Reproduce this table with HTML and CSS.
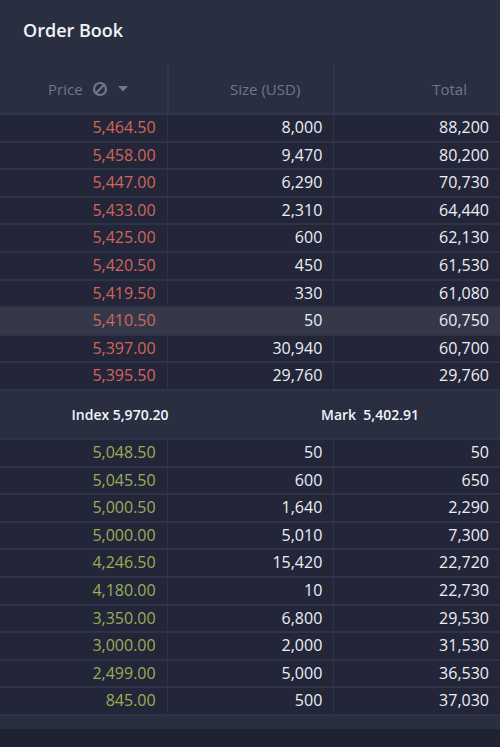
FILE: index.html
```html
<!DOCTYPE html>
<html>
<head>
<meta charset="utf-8">
<link rel="stylesheet" href="styles.css">
</head>
<body>
<div class="panel">
  <div class="title">Order Book</div>
  <div class="thead">
    <div class="th th-price">Price
      <svg class="ico-none" width="16" height="16" viewBox="0 0 16 16"><circle cx="8" cy="8" r="6" fill="none" stroke="currentColor" stroke-width="2.2"/><line x1="3.8" y1="12.2" x2="12.2" y2="3.8" stroke="currentColor" stroke-width="2.2"/></svg>
      <svg class="ico-caret" width="10" height="6" viewBox="0 0 10 6"><path d="M0 0 L10 0 L5 5.5 Z" fill="currentColor"/></svg>
    </div>
    <div class="th">Size (USD)</div>
    <div class="th">Total</div>
  </div>
  <div class="rows asks">
    <div class="row"><div class="c price">5,464.50</div><div class="c">8,000</div><div class="c">88,200</div></div>
    <div class="row"><div class="c price">5,458.00</div><div class="c">9,470</div><div class="c">80,200</div></div>
    <div class="row"><div class="c price">5,447.00</div><div class="c">6,290</div><div class="c">70,730</div></div>
    <div class="row"><div class="c price">5,433.00</div><div class="c">2,310</div><div class="c">64,440</div></div>
    <div class="row"><div class="c price">5,425.00</div><div class="c">600</div><div class="c">62,130</div></div>
    <div class="row"><div class="c price">5,420.50</div><div class="c">450</div><div class="c">61,530</div></div>
    <div class="row"><div class="c price">5,419.50</div><div class="c">330</div><div class="c">61,080</div></div>
    <div class="row hover"><div class="c price">5,410.50</div><div class="c">50</div><div class="c">60,750</div></div>
    <div class="row"><div class="c price">5,397.00</div><div class="c">30,940</div><div class="c">60,700</div></div>
    <div class="row"><div class="c price">5,395.50</div><div class="c">29,760</div><div class="c">29,760</div></div>
  </div>
  <div class="mid">
    <div class="mid-cell">Index 5,970.20</div>
    <div class="mid-cell">Mark&nbsp; 5,402.91</div>
  </div>
  <div class="rows bids">
    <div class="row"><div class="c price">5,048.50</div><div class="c">50</div><div class="c">50</div></div>
    <div class="row"><div class="c price">5,045.50</div><div class="c">600</div><div class="c">650</div></div>
    <div class="row"><div class="c price">5,000.50</div><div class="c">1,640</div><div class="c">2,290</div></div>
    <div class="row"><div class="c price">5,000.00</div><div class="c">5,010</div><div class="c">7,300</div></div>
    <div class="row"><div class="c price">4,246.50</div><div class="c">15,420</div><div class="c">22,720</div></div>
    <div class="row"><div class="c price">4,180.00</div><div class="c">10</div><div class="c">22,730</div></div>
    <div class="row"><div class="c price">3,350.00</div><div class="c">6,800</div><div class="c">29,530</div></div>
    <div class="row"><div class="c price">3,000.00</div><div class="c">2,000</div><div class="c">31,530</div></div>
    <div class="row"><div class="c price">2,499.00</div><div class="c">5,000</div><div class="c">36,530</div></div>
    <div class="row"><div class="c price">845.00</div><div class="c">500</div><div class="c">37,030</div></div>
  </div>
  <div class="foot"></div>
</div>
</body>
</html>
```

FILE: styles.css
```css
html, body {
  margin: 0;
  padding: 0;
  background: #1f2230;
}
body {
  font-family: "Open Sans", "Noto Sans", sans-serif;
  color: #e6e7ee;
}
.panel {
  width: 500px;
  background: #2a2e41;
}
.title {
  height: 64px;
  box-sizing: border-box;
  padding: 17px 0 0 23px;
  font-size: 18px;
  font-weight: 600;
  color: #f2f3f7;
  line-height: 26px;
}
.thead {
  display: flex;
  height: 49px;
  border-bottom: 2px solid #31364b;
}
.th {
  flex: none;
  width: 33.3333%;
  box-sizing: border-box;
  display: flex;
  align-items: center;
  justify-content: flex-end;
  padding-right: 33px;
  font-size: 15px;
  color: #71768c;
  border-left: 2px solid #31364a;
}
.th:first-child {
  border-left: none;
}
.th-price {
  padding-right: 39px;
}
.ico-none {
  margin-left: 9px;
  color: #71768c;
}
.ico-caret {
  margin-left: 10px;
  margin-top: 1px;
  color: #71768c;
}
.row {
  display: flex;
  height: 25.6px;
  background: #232639;
  border-bottom: 2px solid #2e3348;
}
.row.hover {
  background: #343849;
}
.c {
  flex: none;
  width: 33.3333%;
  box-sizing: border-box;
  text-align: right;
  padding-right: 11px;
  font-size: 16px;
  line-height: 25.6px;
  color: #eceef3;
  border-left: 1px solid #2e3348;
}
.c:first-child {
  border-left: none;
}
.row.hover .c {
  border-left-color: transparent;
}
.asks .price {
  color: #d2655a;
}
.bids .price {
  color: #9aad54;
}
.mid {
  display: flex;
  height: 47px;
  align-items: center;
  border-bottom: 2px solid #2e3348;
}
.mid-cell {
  flex: none;
  width: 50%;
  box-sizing: border-box;
  text-align: center;
  padding-right: 10px;
  font-size: 14px;
  font-weight: 600;
  color: #f3f4f8;
}
.foot {
  height: 13px;
  background: #2a2e41;
}
```
